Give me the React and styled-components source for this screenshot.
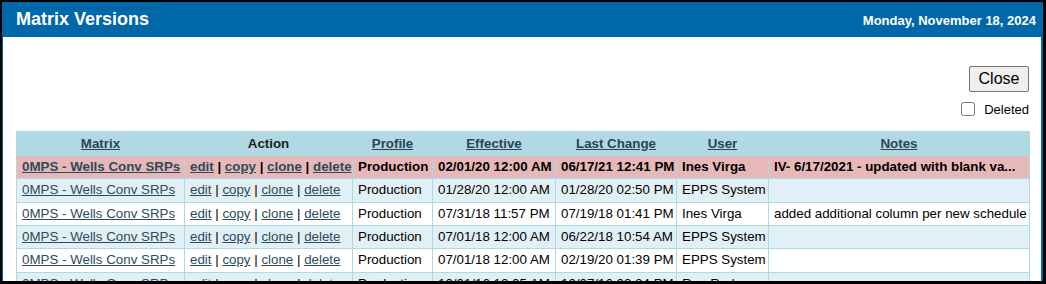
import styled, {createGlobalStyle} from "styled-components";

const GlobalStyle = createGlobalStyle`
    html, body {
        margin: 0;
        padding: 0;
        background: #000;
    }
    body {
        font-family: "Liberation Sans", Arial, sans-serif;
    }
`

const Frame = styled.div`
    height: 284px;
    box-sizing: border-box;
    padding: 2px 3px 3px 2px;
    display: flex;
`

const Panel = styled.div`
    flex: 1;
    display: flex;
    flex-direction: column;
    background: #fff;
    border-left: 1px solid #0067a8;
    border-right: 2px solid #0067a8;
    overflow: hidden;
`

const TitleBar = styled.div`
    height: 35px;
    flex: none;
    display: flex;
    align-items: center;
    justify-content: space-between;
    padding: 0 5px 0 13px;
    background: #0067a8;
    color: #fff;
`

const Title = styled.h1`
    margin: 0;
    font-size: 18px;
    font-weight: bold;
`

const DateText = styled.span`
    font-size: 13px;
    font-weight: bold;
    padding-top: 2px;
`

const Content = styled.div`
    padding: 0 12px 0 13px;
`

const Toolbar = styled.div`
    display: flex;
    flex-direction: column;
    align-items: flex-end;
    margin-top: 29px;
`

const CloseButton = styled.button`
    width: 60px;
    height: 26px;
    padding: 0;
    font-family: "Liberation Sans", Arial, sans-serif;
    font-size: 16px;
    color: #000;
    background: #efefef;
    border: 1px solid #767676;
    border-radius: 2px;
`

const DeletedLabel = styled.label`
    display: flex;
    align-items: center;
    margin-top: 9px;
    font-size: 13px;
    height: 16px;

    input {
        width: 14px;
        height: 14px;
        margin: 0 9px 0 0;
    }
`

const Grid = styled.table`
    margin-top: 14px;
    width: 1013px;
    table-layout: fixed;
    border-collapse: collapse;
    font-size: 13.33px;
    white-space: nowrap;
`

const HeadCell = styled.th`
    background: #b0d9e3;
    border: 1px solid #b0d9e3;
    padding: 3px 4px;
    line-height: 17px;
    font-weight: bold;
    text-align: center;
    color: #222;
`

const Row = styled.tr`
    background: ${p => p.$current ? "#e6b8b8" : p.$alt ? "#e1f0f5" : "#fff"};
    font-weight: ${p => p.$current ? "bold" : "normal"};
`

const Cell = styled.td`
    border: 1px solid #add8e6;
    padding: 3px 4px 3px 5px;
    line-height: 16.33px;
    overflow: hidden;
    color: #000;
`

const Link = styled.a`
    color: #2c4b5c;
    text-decoration: underline;
    cursor: pointer;
`

const HeadLink = styled(Link)`
    color: #2c4555;
`

const widths = [168, 168, 80, 123, 121, 92, 261]

const versions = [
    {effective: "02/01/20 12:00 AM", changed: "06/17/21 12:41 PM", user: "Ines Virga", notes: "IV- 6/17/2021 - updated with blank va...", current: true},
    {effective: "01/28/20 12:00 AM", changed: "01/28/20 02:50 PM", user: "EPPS System", notes: ""},
    {effective: "07/31/18 11:57 PM", changed: "07/19/18 01:41 PM", user: "Ines Virga", notes: "added additional column per new schedule"},
    {effective: "07/01/18 12:00 AM", changed: "06/22/18 10:54 AM", user: "EPPS System", notes: ""},
    {effective: "07/01/18 12:00 AM", changed: "02/19/20 01:39 PM", user: "EPPS System", notes: ""},
    {effective: "10/01/16 12:05 AM", changed: "10/07/16 03:24 PM", user: "Ron Rader", notes: ""},
]

function Actions () {
    return (
        <>
            <Link>edit</Link> | <Link>copy</Link> | <Link>clone</Link> | <Link>delete</Link>
        </>
    )
}

export default function App () {
    return (
        <Frame>
            <GlobalStyle/>
            <Panel>
                <TitleBar>
                    <Title>Matrix Versions</Title>
                    <DateText>Monday, November 18, 2024</DateText>
                </TitleBar>
                <Content>
                    <Toolbar>
                        <CloseButton>Close</CloseButton>
                        <DeletedLabel><input type="checkbox"/>Deleted</DeletedLabel>
                    </Toolbar>
                    <Grid>
                        <colgroup>
                            {widths.map((w, i) => <col key={i} style={{width: w}}/>)}
                        </colgroup>
                        <thead>
                            <tr>
                                <HeadCell><HeadLink>Matrix</HeadLink></HeadCell>
                                <HeadCell>Action</HeadCell>
                                <HeadCell><HeadLink>Profile</HeadLink></HeadCell>
                                <HeadCell><HeadLink>Effective</HeadLink></HeadCell>
                                <HeadCell><HeadLink>Last Change</HeadLink></HeadCell>
                                <HeadCell><HeadLink>User</HeadLink></HeadCell>
                                <HeadCell><HeadLink>Notes</HeadLink></HeadCell>
                            </tr>
                        </thead>
                        <tbody>
                            {versions.map((v, i) => (
                                <Row key={i} $current={v.current} $alt={i % 2 === 1}>
                                    <Cell><Link>0MPS - Wells Conv SRPs</Link></Cell>
                                    <Cell><Actions/></Cell>
                                    <Cell>Production</Cell>
                                    <Cell>{v.effective}</Cell>
                                    <Cell>{v.changed}</Cell>
                                    <Cell>{v.user}</Cell>
                                    <Cell>{v.notes}</Cell>
                                </Row>
                            ))}
                        </tbody>
                    </Grid>
                </Content>
            </Panel>
        </Frame>
    )
}
